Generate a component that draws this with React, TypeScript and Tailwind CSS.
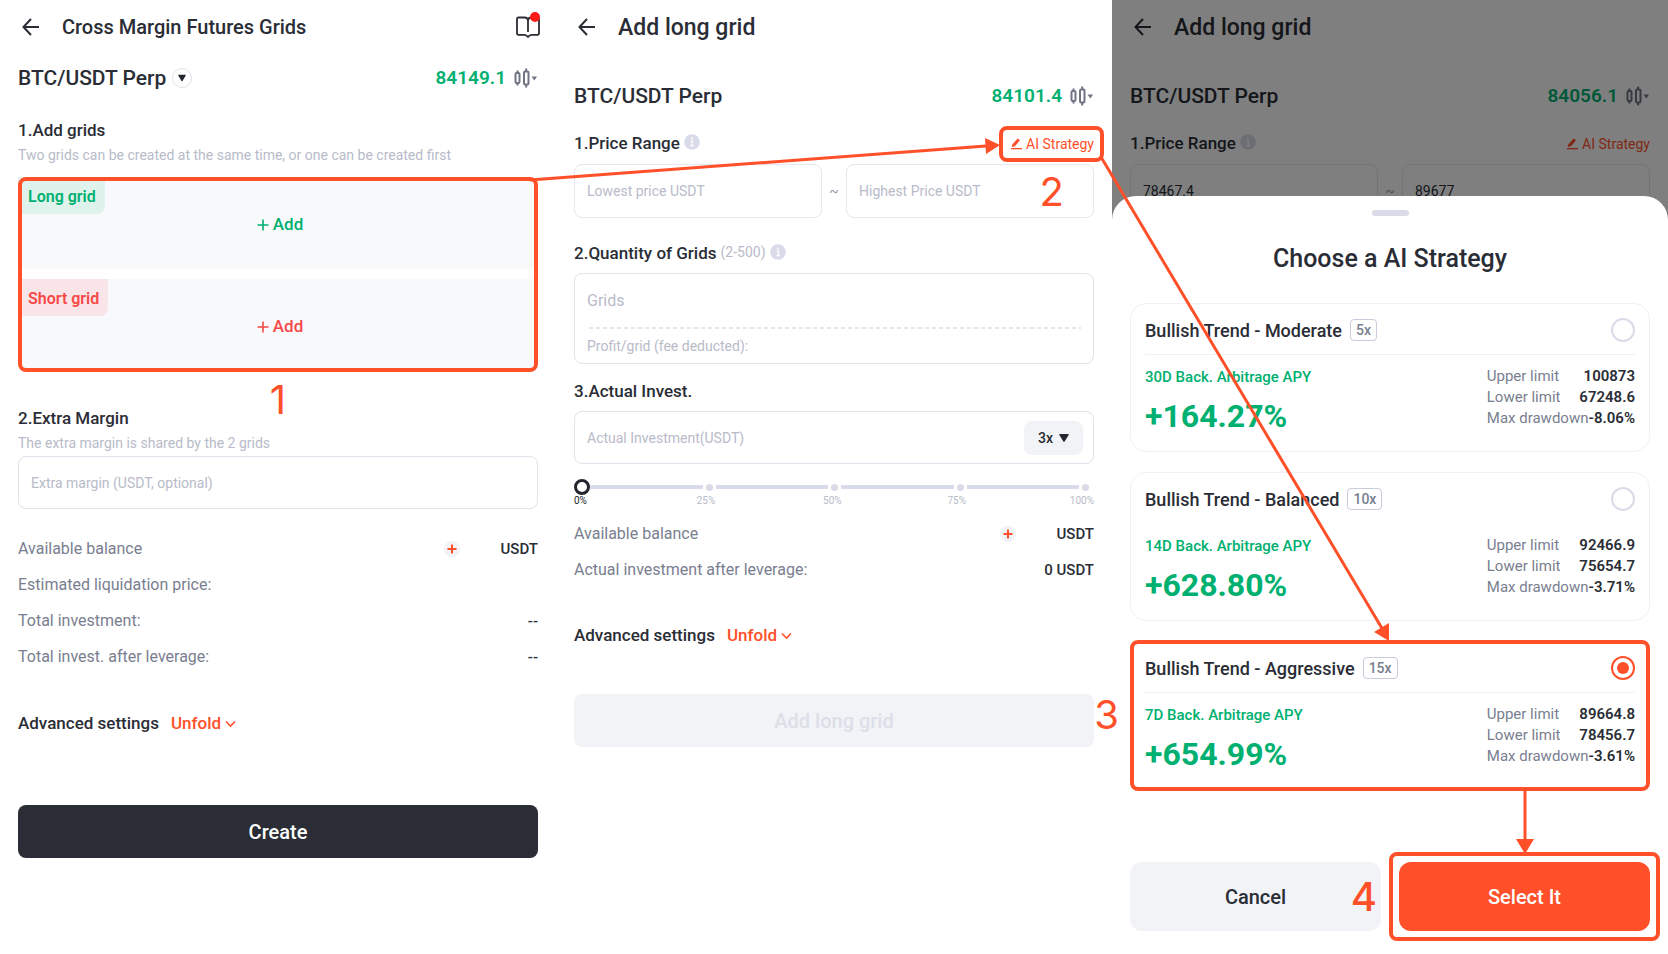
import { useState } from "react";

type Strategy = {
  name: string;
  leverage: string;
  days: string;
  apy: string;
  upper: string;
  lower: string;
  drawdown: string;
  divider: string;
};

const strategies: Strategy[] = [
  { name: "Moderate", leverage: "5x", days: "30D", apy: "+164.27%", upper: "100873", lower: "67248.6", drawdown: "-8.06%", divider: "bg-[#f0f1f5]" },
  { name: "Balanced", leverage: "10x", days: "14D", apy: "+628.80%", upper: "92466.9", lower: "75654.7", drawdown: "-3.71%", divider: "bg-transparent" },
  { name: "Aggressive", leverage: "15x", days: "7D", apy: "+654.99%", upper: "89664.8", lower: "78456.7", drawdown: "-3.61%", divider: "bg-[#f0f1f5]" },
];

function BackIcon() {
  return (
    <svg width="18" height="18" viewBox="0 0 18 18" fill="none" stroke="currentColor" strokeWidth="2">
      <path d="M17 9H1.5M9 1L1.5 9L9 17" />
    </svg>
  );
}

function BookIcon() {
  return (
    <svg width="24" height="22" viewBox="0 0 24 22" fill="none" stroke="currentColor" strokeWidth="1.8" strokeLinejoin="round">
      <path d="M12 16V5C12 2.8 10.5 1.5 8.5 1.5H2.500C1.500 1.500 1 2 1 3V17.500C1 18.300 1.500 18.800 2.500 18.800H8.500C10 18.800 11 19.500 12 21C13 19.500 14 18.800 15.500 18.800H21.500C22.500 18.800 23 18.300 23 17.500V3C23 2 22.500 1.500 21.500 1.500H15.500C13.500 1.500 12 2.800 12 5" />
    </svg>
  );
}

function CandlesIcon() {
  return (
    <svg width="24" height="20" viewBox="0 0 24 20" fill="none" stroke="#6f7484" strokeWidth="2">
      <rect x="1.5" y="5" width="4" height="10" rx="1.2" />
      <path d="M3.5 2.5V5M3.5 15V17.5" />
      <rect x="10" y="3.5" width="4.5" height="13" rx="1.2" />
      <path d="M12.2 0.5V3.5M12.2 16.5V19.5" />
      <path d="M17.5 8.5H23L20.250 12.5Z" fill="#6f7484" stroke="none" />
    </svg>
  );
}

function Caret({ size }: { size: number }) {
  return (
    <svg width={size} height={size} viewBox="0 0 10 10">
      <path d="M1 1H9C9.6 1 9.9 1.6 9.5 2.2L5.6 8.6C5.3 9.1 4.7 9.1 4.4 8.6L0.5 2.2C0.1 1.6 0.4 1 1 1Z" fill="#23262e" />
    </svg>
  );
}

function InfoIcon() {
  return (
    <svg width="16" height="16" viewBox="0 0 16 16">
      <circle cx="8" cy="8" r="7.8" fill="#d9dce8" />
      <circle cx="8" cy="4.6" r="1" fill="#fff" />
      <path d="M6.5 7H8.3V11.5M6.3 11.7H10" stroke="#fff" strokeWidth="1.2" fill="none" />
    </svg>
  );
}

function PencilIcon() {
  return (
    <svg width="11" height="12" viewBox="0 0 11 12" fill="#ff5029">
      <path d="M6.6 0.4L9 2.3L3.9 8.3L0.8 9.1L1.3 6.4Z" />
      <rect x="0" y="10" width="11" height="1.3" />
    </svg>
  );
}

function Header({ title, large, guide }: { title: string; large?: boolean; guide?: boolean }) {
  return (
    <header className="flex h-[54px] items-center pl-1">
      <button type="button" aria-label="Back">
        <BackIcon />
      </button>
      <h1 className={large ? "ml-[22px] pt-[2px] text-[23px] font-medium" : "ml-[22px] text-xl font-medium"}>{title}</h1>
      {guide && (
        <button type="button" aria-label="Guide" className="relative ml-auto -mr-[2px]">
          <BookIcon />
          <span className="absolute -top-1 right-0 size-[10px] rounded-full bg-[#ff1a1a]" />
        </button>
      )}
    </header>
  );
}

function PairRow({ price, selectable }: { price: string; selectable?: boolean }) {
  return (
    <div className="flex h-8 items-center">
      <span className="pt-px text-[21px] font-medium">BTC/USDT Perp</span>
      {selectable && (
        <button type="button" aria-label="Change pair" className="ml-[6px] flex size-5 items-center justify-center rounded-full border border-[#dfe1ea]">
          <Caret size={8} />
        </button>
      )}
      <span className="ml-auto text-[19px] font-semibold text-[#00b070]">{price}</span>
      <button type="button" aria-label="Chart" className="ml-2">
        <CandlesIcon />
      </button>
    </div>
  );
}

function PriceRange({ id, low, high, marked }: { id: string; low?: string; high?: string; marked?: boolean }) {
  const field = "h-[54px] w-full min-w-0 rounded-lg border border-[#e6e8f0] px-3 text-sm outline-none placeholder:text-[#b8bbc9]";
  return (
    <>
      <div className="mt-5 flex h-6 items-center">
        <h2 className="text-[17px] font-medium">1.Price Range</h2>
        <span className="ml-1 -mt-1">
          <InfoIcon />
        </span>
        <button type="button" className="relative ml-auto flex items-center gap-1 text-sm text-[#ff5029]">
          <PencilIcon />
          AI Strategy
          {marked && <span className="absolute -right-[10px] -left-3 -inset-y-2 rounded-lg border-4 border-[#ff5029]" />}
        </button>
      </div>
      <div className="mt-2 flex items-center">
        <input aria-label="Lowest price" id={`${id}-low`} className={field} defaultValue={low} placeholder="Lowest price USDT" />
        <span className="w-6 shrink-0 text-center text-sm text-[#9a9eae]">~</span>
        <input aria-label="Highest price" id={`${id}-high`} className={field} defaultValue={high} placeholder="Highest Price USDT" />
      </div>
    </>
  );
}

function InfoRow({ label, value, plus }: { label: string; value?: string; plus?: boolean }) {
  return (
    <div className="flex h-9 items-center text-base">
      <span className="text-[#797e8f]">{label}</span>
      {plus && (
        <button type="button" aria-label="Add funds" className="ml-auto mr-[41px] flex size-4 items-center justify-center rounded-full bg-[#f2f3f7]">
          <svg width="10" height="10" viewBox="0 0 10 10" stroke="#ff5029" strokeWidth="2">
            <path d="M5 0.5V9.5M0.5 5H9.5" />
          </svg>
        </button>
      )}
      <span className={plus ? "text-[15px] font-medium" : "ml-auto text-[15px] font-medium"}>{value}</span>
    </div>
  );
}

function AdvancedSettings() {
  return (
    <div className="flex h-6 items-center text-[17px] font-medium">
      Advanced settings
      <button type="button" className="ml-3 flex items-center gap-1 text-[#ff5029]">
        Unfold
        <svg width="11" height="8" viewBox="0 0 11 8" fill="none" stroke="currentColor" strokeWidth="1.6">
          <path d="M1 1.5L5.5 6L10 1.5" />
        </svg>
      </button>
    </div>
  );
}

function GridSlot({ label, tagClass, addClass }: { label: string; tagClass: string; addClass: string }) {
  return (
    <div className="relative flex h-[92px] items-center justify-center rounded-lg bg-[#f8f9fb]">
      <span className={`absolute top-0 left-0 flex h-[37px] items-center rounded-br-lg pt-[2px] pr-[9px] pl-[10px] text-base font-semibold ${tagClass}`}>
        {label}
      </span>
      <button type="button" className={`mt-1 flex items-center gap-1 pl-1 text-[17px] font-medium ${addClass}`}>
        <svg width="12" height="12" viewBox="0 0 12 12" stroke="currentColor" strokeWidth="1.6">
          <path d="M6 0.5V11.5M0.5 6H11.5" />
        </svg>
        Add
      </button>
    </div>
  );
}

function CrossMarginScreen() {
  return (
    <section className="px-[18px]">
      <Header title="Cross Margin Futures Grids" guide />
      <div className="mt-2">
        <PairRow price="84149.1" selectable />
      </div>
      <h2 className="mt-6 text-[17px] leading-6 font-medium">1.Add grids</h2>
      <p className="mt-[3px] text-sm leading-5 text-[#b8bbc9]">Two grids can be created at the same time, or one can be created first</p>
      <div className="relative mt-3 flex flex-col gap-[10px] pb-px">
        <GridSlot label="Long grid" tagClass="bg-[#dff3ec] text-[#00b070]" addClass="text-[#00b070]" />
        <GridSlot label="Short grid" tagClass="bg-[#f9e5e7] text-[#f54848]" addClass="text-[#f54848]" />
        <div className="pointer-events-none absolute inset-0 rounded-lg border-4 border-[#ff5029]" />
        <StepNumber value="1" place="top-[199px] left-1/2 -translate-x-1/2" />
      </div>
      <h2 className="mt-[34px] text-[17px] leading-6 font-medium">
        <label htmlFor="extra-margin">2.Extra Margin</label>
      </h2>
      <p className="mt-[3px] text-sm leading-5 text-[#b8bbc9]">The extra margin is shared by the 2 grids</p>
      <input
        id="extra-margin"
        className="mt-[3px] block h-[53px] w-full rounded-lg border border-[#e0e2ec] px-3 text-sm outline-none placeholder:text-[#b8bbc9]"
        placeholder="Extra margin (USDT, optional)"
      />
      <div className="mt-[22px] mb-[37px]">
        <InfoRow label="Available balance" value="USDT" plus />
        <InfoRow label="Estimated liquidation price:" />
        <InfoRow label="Total investment:" value="--" />
        <InfoRow label="Total invest. after leverage:" value="--" />
      </div>
      <AdvancedSettings />
      <button type="button" className="mt-[69px] h-[53px] w-full rounded-lg bg-[#2a2d35] text-xl font-medium text-white">
        Create
      </button>
    </section>
  );
}

function StepNumber({ value, place }: { value: string; place: string }) {
  return <span className={`pointer-events-none absolute z-10 font-[Inter,sans-serif] text-[40px] leading-[48px] text-[#ff5029] ${place}`}>{value}</span>;
}

function InvestSlider() {
  const [percent, setPercent] = useState(0);
  return (
    <div className="mt-[15px]">
      <div className="relative flex h-4 items-center pr-[2px] pl-4">
        {[25, 50, 75, 100].map((stop) => (
          <div key={stop} className="flex flex-1 items-center gap-[3px]">
            <span className="h-1 flex-1 bg-[#d9dce8]" />
            <span className="mr-[3px] size-[7px] rounded-full bg-[#d9dce8]" />
          </div>
        ))}
        <input
          type="range"
          aria-label="Share of balance"
          value={percent}
          onChange={(e) => setPercent(Number(e.target.value))}
          className="absolute inset-0 h-4 w-full appearance-none bg-transparent [&::-webkit-slider-thumb]:size-4 [&::-webkit-slider-thumb]:appearance-none [&::-webkit-slider-thumb]:rounded-full [&::-webkit-slider-thumb]:border-[3px] [&::-webkit-slider-thumb]:border-[#23262e] [&::-webkit-slider-thumb]:bg-white"
        />
      </div>
      <div className="flex justify-between text-[10px] leading-3 text-[#b8bbc9]">
        <span className="text-[#23262e]">0%</span>
        <span className="pl-[6px]">25%</span>
        <span className="pl-1">50%</span>
        <span className="pl-[2px]">75%</span>
        <span>100%</span>
      </div>
    </div>
  );
}

function AddLongGridScreen() {
  return (
    <section className="relative px-[18px]">
      <Header title="Add long grid" large />
      <div className="mt-[26px]">
        <PairRow price="84101.4" />
      </div>
      <div className="relative">
        <PriceRange id="form" marked />
        <StepNumber value="2" place="right-[30px] bottom-[2px]" />
      </div>
      <div className="mt-6 flex h-6 items-center">
        <h2 className="text-[17px] font-medium">
          <label htmlFor="grids">2.Quantity of Grids</label>
        </h2>
        <span className="ml-1 -mt-1 text-sm text-[#b8bbc9]">(2-500)</span>
        <span className="ml-1 -mt-1">
          <InfoIcon />
        </span>
      </div>
      <div className="mt-[7px] rounded-lg border border-[#e0e2ec] px-3">
        <input id="grids" className="block h-[53px] w-full text-base outline-none placeholder:text-[#b8bbc9]" placeholder="Grids" />
        <svg width="100%" height="2" className="block">
          <line x1="2" y1="1" x2="100%" y2="1" stroke="#dcdfea" strokeWidth="1.5" strokeDasharray="4 3" />
        </svg>
        <p className="py-[7px] text-sm leading-5 text-[#b8bbc9]">Profit/grid (fee deducted):</p>
      </div>
      <h2 className="mt-[15px] text-[17px] leading-6 font-medium">
        <label htmlFor="invest">3.Actual Invest.</label>
      </h2>
      <div className="mt-2 flex h-[53px] items-center rounded-lg border border-[#e0e2ec] pr-[10px] pl-3">
        <input id="invest" className="min-w-0 flex-1 text-sm outline-none placeholder:text-[#b8bbc9]" placeholder="Actual Investment(USDT)" />
        <div className="relative">
          <select aria-label="Leverage" defaultValue="3x" className="h-[34px] w-[59px] appearance-none rounded-lg bg-[#f2f3f7] pl-[14px] text-sm font-medium">
            <option>3x</option>
            <option>5x</option>
            <option>10x</option>
          </select>
          <span className="pointer-events-none absolute top-3 right-[14px]">
            <Caret size={10} />
          </span>
        </div>
      </div>
      <InvestSlider />
      <div className="mt-[9px] mb-9">
        <InfoRow label="Available balance" value="USDT" plus />
        <InfoRow label="Actual investment after leverage:" value="0 USDT" />
      </div>
      <AdvancedSettings />
      <div className="relative mt-[46px]">
        <button type="button" disabled className="h-[53px] w-full rounded-lg bg-[#f2f3f7] text-xl font-medium text-[#dcdee8]">
          Add long grid
        </button>
        <StepNumber value="3" place="-right-[25px] -top-[3px]" />
      </div>
    </section>
  );
}

function StrategyCard({ strategy, checked, onSelect }: { strategy: Strategy; checked: boolean; onSelect: () => void }) {
  return (
    <label className="relative block rounded-2xl border border-[#f0f1f5] px-[14px] pb-[18px]">
      <div className="flex h-[50px] items-center pt-[2px]">
        <span className="text-[18px] font-medium">Bullish Trend - {strategy.name}</span>
        <span className="ml-2 rounded border border-[#c9ccd9] px-[5px] text-sm leading-5 font-medium text-[#797e8f]">{strategy.leverage}</span>
        <input
          type="radio"
          name="strategy"
          checked={checked}
          onChange={onSelect}
          className="ml-auto size-6 appearance-none rounded-full border-2 border-[#d9dce8] bg-clip-content p-1 checked:border-[#ff5029] checked:bg-[#ff5029]"
        />
      </div>
      <div className={`h-px ${strategy.divider}`} />
      <div className="flex justify-between pt-[11px]">
        <div className="text-[#00b070]">
          <p className="text-[15px] leading-[22px] font-medium">{strategy.days} Back. Arbitrage APY</p>
          <p className="mt-[11px] text-[32px] leading-[34px] font-bold">{strategy.apy}</p>
        </div>
        <dl className="text-[15px] leading-[21px]">
          <div className="flex justify-between">
            <dt className="text-[#797e8f]">Upper limit</dt>
            <dd className="font-semibold">{strategy.upper}</dd>
          </div>
          <div className="flex justify-between">
            <dt className="text-[#797e8f]">Lower limit</dt>
            <dd className="font-semibold">{strategy.lower}</dd>
          </div>
          <div className="flex justify-between">
            <dt className="text-[#797e8f]">Max drawdown</dt>
            <dd className="font-semibold">{strategy.drawdown}</dd>
          </div>
        </dl>
      </div>
      {checked && <span className="pointer-events-none absolute -inset-x-px -inset-y-[2px] rounded-lg border-4 border-[#ff5029]" />}
    </label>
  );
}

function StrategySheetScreen() {
  const [selected, setSelected] = useState("Aggressive");

  return (
    <section className="relative flex flex-col overflow-hidden pt-[196px]">
      <div className="absolute inset-0 px-[18px]">
        <Header title="Add long grid" large />
        <div className="mt-[26px]">
          <PairRow price="84056.1" />
        </div>
        <PriceRange id="sheet" low="78467.4" high="89677" />
      </div>
      <div className="absolute inset-0 bg-black/50" />

      <div className="relative flex-1 rounded-t-3xl bg-white px-[18px] pt-[14px] pb-[23px]">
        <div className="mx-auto h-[6px] w-[37px] rounded-full bg-[#d9dce8]" />
        <h2 className="mt-[27px] text-center text-[25px] leading-8 font-medium">Choose a AI Strategy</h2>
        <div className="mt-7 flex flex-col gap-5">
          {strategies.map((s) => (
            <StrategyCard key={s.name} strategy={s} checked={selected === s.name} onSelect={() => setSelected(s.name)} />
          ))}
        </div>
        <div className="mt-[72px] grid grid-cols-2 gap-[18px] text-xl font-medium">
          <div className="relative">
            <button type="button" className="h-[69px] w-full rounded-xl bg-[#f2f3f7]">
              Cancel
            </button>
            <StepNumber value="4" place="right-1 top-[11px]" />
          </div>
          <div className="relative">
            <button type="button" className="h-[69px] w-full rounded-xl bg-[#ff5029] text-white">
              Select It
            </button>
            <div className="pointer-events-none absolute -inset-[10px] rounded-lg border-4 border-[#ff5029]" />
          </div>
        </div>
      </div>
    </section>
  );
}

// Arrows that lead from one step to the next, drawn over the screens
function FlowArrows() {
  return (
    <svg className="pointer-events-none absolute top-0 left-0 h-[954px] w-full" viewBox="0 0 1668 954" preserveAspectRatio="none" stroke="#ff5029" strokeWidth="3" fill="#ff5029">
      <path d="M530 180L986 146" />
      <path d="M985 138L1000 145L986 154Z" strokeWidth="0" />
      <path d="M1101 157L1383 630" />
      <path d="M1374 632L1389 623L1389 641Z" strokeWidth="0" />
      <path d="M1525 789V840" />
      <path d="M1516 839H1534L1525 854Z" strokeWidth="0" />
    </svg>
  );
}

export default function App() {
  return (
    <main className="relative grid min-h-screen grid-cols-3 bg-white font-[Roboto,sans-serif] text-[#2a2d35]">
      <CrossMarginScreen />
      <AddLongGridScreen />
      <StrategySheetScreen />
      <FlowArrows />
    </main>
  );
}
